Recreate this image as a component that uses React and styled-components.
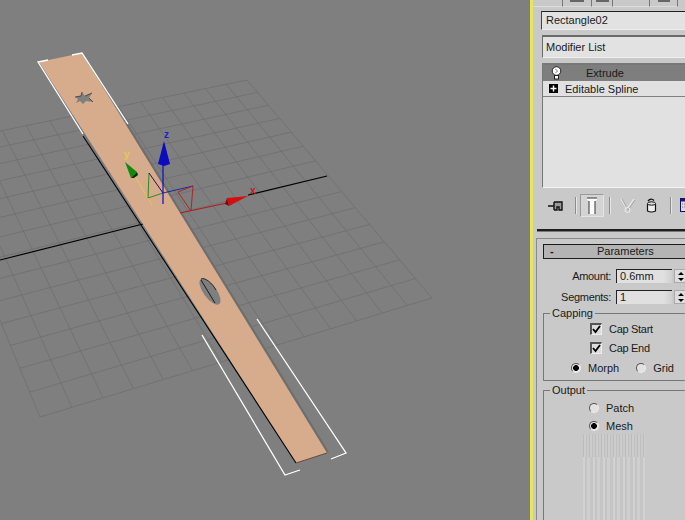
import React from 'react'
import styled, { createGlobalStyle } from 'styled-components'

const GlobalStyle = createGlobalStyle`
    html, body { margin: 0; padding: 0; background: #7f7f7f; }
    * { box-sizing: border-box; }
`

// grid on the ground plane, 14 cells each way, corners read off the picture
const corners = [[247, 80], [432, 298], [40, 417], [-72, 146]]

const homography = ([p0, p1, p2, p3]) => {
    const dx1 = p1[0] - p2[0]
    const dx2 = p3[0] - p2[0]
    const dy1 = p1[1] - p2[1]
    const dy2 = p3[1] - p2[1]
    const sx = p0[0] - p1[0] + p2[0] - p3[0]
    const sy = p0[1] - p1[1] + p2[1] - p3[1]
    const det = dx1 * dy2 - dx2 * dy1
    const g = (sx * dy2 - dx2 * sy) / det
    const h = (dx1 * sy - sx * dy1) / det
    const a = p1[0] - p0[0] + g * p1[0]
    const b = p3[0] - p0[0] + h * p3[0]
    const d = p1[1] - p0[1] + g * p1[1]
    const e = p3[1] - p0[1] + h * p3[1]
    return (u, v) => {
        const w = g * u + h * v + 1
        return [(a * u + b * v + p0[0]) / w, (d * u + e * v + p0[1]) / w]
    }
}

const gridPath = () => {
    const map = homography(corners)
    let path = ''
    for (let i = 0; i <= 14; i++) {
        const t = i / 14
        const a = map(t, 0)
        const b = map(t, 1)
        const c = map(0, t)
        const d = map(1, t)
        path += `M${a[0].toFixed(1)} ${a[1].toFixed(1)}L${b[0].toFixed(1)} ${b[1].toFixed(1)}`
        path += `M${c[0].toFixed(1)} ${c[1].toFixed(1)}L${d[0].toFixed(1)} ${d[1].toFixed(1)}`
    }
    return path
}

const Scene = () => (
    <svg width="529" height="520" viewBox="0 0 529 520" style={{ display: 'block' }}>
        <path d={gridPath()} stroke="#707070" strokeWidth="0.9" fill="none" />
        <path d="M0 260L143 224M248 195L327 176" stroke="#000" strokeWidth="1.2" fill="none" />
        {/* extruded strip */}
        <polygon points="128,124 329,452 325,454 125,124" fill="#6e6e6e" />
        <polygon points="39,62 82,53 327,453 296,463" fill="#d6ac8d" />
        <path d="M83 136L296 463" stroke="#000" strokeWidth="1.1" fill="none" />
        <path d="M296 463L327 453" stroke="#6b4a35" strokeWidth="1" fill="none" />
        {/* star hole */}
        <polygon points="75,97 81,96 82,92 85,96 92,93 89,98 93,102 86,101 83,104 80,101 76,103 78,99" fill="#7f7f7f" />
        <path d="M75 97L81 96L82 92M85 96L92 93M89 98L93 102" stroke="#2a2a2a" strokeWidth="0.7" fill="none" />
        {/* slot hole */}
        <ellipse cx="210" cy="291.5" rx="15.5" ry="6.5" transform="rotate(54 210 291.5)" fill="#7f7f7f" />
        <path d="M201 279C205 277 212 283 216 290" stroke="#1c1c1c" strokeWidth="0.9" fill="none" />
        <path d="M201 280L215 303" stroke="#1c1c1c" strokeWidth="1" fill="none" />
        {/* selection brackets */}
        <path d="M48 60L38 62L83 134M72 55L82 53L128 124M202 335L285 475L300 470M257 319L346 453L331 459" stroke="#fff" strokeWidth="1.3" fill="none" />
        {/* gizmo */}
        <path d="M130 168L152 205" stroke="#e2c95a" strokeWidth="1" fill="none" />
        <path d="M149 173L148 198L163 193" stroke="#2f8a1f" strokeWidth="1" fill="none" />
        <path d="M149 173L163 193" stroke="#2b1050" strokeWidth="1" fill="none" />
        <path d="M163 193L193 186" stroke="#1c2a9a" strokeWidth="1" fill="none" />
        <path d="M193 186L191 211L178 192L193 186" stroke="#a5282a" strokeWidth="1" fill="none" />
        <path d="M180 213L227 203" stroke="#b5191b" strokeWidth="1" fill="none" />
        <path d="M163 164V204" stroke="#0d0dc8" strokeWidth="1.2" fill="none" />
        <polygon points="164,141 170,164 164,166 158,164" fill="#0b0bbf" />
        <polygon points="125,162 137,172 131,178" fill="#0f8a0f" />
        <polygon points="137,172 131,178 134,178 138,175" fill="#063006" />
        <polygon points="248,196 227,198 229,206" fill="#d40f0f" />
        <polygon points="227,198 229,206 225,204" fill="#7a0a0a" />
        <AxisLabel x="164" y="138" fill="#2020c8">z</AxisLabel>
        <AxisLabel x="124" y="158" fill="#e2c95a">y</AxisLabel>
        <AxisLabel x="250" y="194" fill="#c81818">x</AxisLabel>
    </svg>
)

const PinIcon = () => (
    <svg width="16" height="14" viewBox="0 0 16 14">
        <path d="M0 7H6" stroke="#000" strokeWidth="1.4" />
        <path d="M6 3V11M6 3H14V11H11V8H9V11H6" stroke="#111" strokeWidth="1.4" fill="#9a9a9a" />
    </svg>
)
const ShowEndIcon = () => (
    <svg width="12" height="18" viewBox="0 0 12 18">
        <path d="M1 1H11V3L9 4V17H3V4L1 3Z" fill="#fff" />
        <path d="M1 1H11M3 4V17M9 4V17" stroke="#333" strokeWidth="1" fill="none" />
    </svg>
)
const FunnelIcon = () => (
    <svg width="16" height="16" viewBox="0 0 16 16">
        <path d="M1 1L7 11L14 1" stroke="#eeeeee" strokeWidth="1.2" fill="none" />
        <path d="M2 1L8 12L15 2" stroke="#999" strokeWidth="0.8" fill="none" />
        <circle cx="7.5" cy="12" r="2.5" stroke="#eee" fill="none" />
    </svg>
)
const TrashIcon = () => (
    <svg width="11" height="15" viewBox="0 0 11 15">
        <path d="M1.5 6V13Q5.5 15 9.5 13V6" fill="#eee" stroke="#111" strokeWidth="1.2" />
        <ellipse cx="5.5" cy="5.5" rx="4" ry="1.7" fill="#ddd" stroke="#111" />
        <path d="M2 3Q5 -0.5 8 2.5" stroke="#111" strokeWidth="1.3" fill="none" />
    </svg>
)
const ConfigIcon = () => (
    <svg width="5" height="15" viewBox="0 0 5 15">
        <rect x="0.5" y="0.5" width="14" height="13" fill="#dcdce8" stroke="#11115a" />
        <rect x="0.5" y="0.5" width="14" height="3" fill="#1a1a70" />
        <path d="M2 6H12M2 9H12" stroke="#777" strokeDasharray="1 1" />
    </svg>
)
const BulbIcon = () => (
    <svg width="11" height="14" viewBox="0 0 11 14">
        <circle cx="5.5" cy="5" r="4.3" fill="#fff" stroke="#222" />
        <path d="M4.5 3L6.5 5L4.5 7" stroke="#777" fill="none" />
        <rect x="3.5" y="9.5" width="4" height="3.5" fill="#fff" stroke="#222" />
    </svg>
)
const PlusBox = () => (
    <svg width="9" height="9" viewBox="0 0 9 9">
        <rect width="9" height="9" fill="#000" />
        <path d="M1.5 4.5H7.5M4.5 1.5V7.5" stroke="#fff" strokeWidth="1.4" />
    </svg>
)
const CheckMark = () => (
    <svg width="9" height="9" viewBox="0 0 9 9">
        <path d="M1 4L3.5 7L8 1" stroke="#000" strokeWidth="1.8" fill="none" />
    </svg>
)

const Spinner = () => (
    <SpinBox>
        <SpinUp />
        <SpinDown />
    </SpinBox>
)

const Spin = ({ label, value }) => (
    <SpinRow>
        <SpinLabel>{label}</SpinLabel>
        <SpinInput>{value}</SpinInput>
        <Spinner />
    </SpinRow>
)

const Check = ({ label }) => (
    <CheckRow>
        <CheckBox><CheckMark /></CheckBox>
        <span>{label}</span>
    </CheckRow>
)

const Radio = ({ label, on }) => (
    <RadioItem>
        <RadioDot $on={on} />
        <span>{label}</span>
    </RadioItem>
)

const App = () => {
    return (
        <Page>
            <GlobalStyle />
            <Viewport><Scene /></Viewport>
            <YellowBar />
            <Panel>
                <TabStrip>
                    <Tab $w={30} />
                    <Tab $w={29}><TabMark $w={14} /></Tab>
                    <Tab $w={21}><TabMark $w={13} /></Tab>
                    <Tab $w={37} />
                    <Tab $w={28}><TabMark $w={12} /></Tab>
                </TabStrip>
                <NameField>Rectangle02</NameField>
                <ModifierField>Modifier List</ModifierField>
                <Stack>
                    <StackTop>
                        <BulbSlot><BulbIcon /></BulbSlot>
                        <span>Extrude</span>
                    </StackTop>
                    <StackBase>
                        <PlusBox />
                        <span>Editable Spline</span>
                    </StackBase>
                </Stack>
                <Toolbar>
                    <PinSlot><PinIcon /></PinSlot>
                    <Sep />
                    <ToolPressed><ShowEndIcon /></ToolPressed>
                    <Sep />
                    <FunnelSlot><FunnelIcon /></FunnelSlot>
                    <TrashSlot><TrashIcon /></TrashSlot>
                    <Sep />
                    <ConfigSlot><ConfigIcon /></ConfigSlot>
                </Toolbar>
                <HeavyRule />
                <Rollout>
                    <RolloutHeader>
                        <Dash>-</Dash>
                        <RolloutTitle>Parameters</RolloutTitle>
                    </RolloutHeader>
                    <Spin label="Amount:" value="0.6mm" />
                    <Spin label="Segments:" value="1" />
                    <Group>
                        <Legend>Capping</Legend>
                        <Check label="Cap Start" />
                        <Check label="Cap End" />
                        <RadioRow>
                            <Radio label="Morph" on />
                            <Radio label="Grid" />
                        </RadioRow>
                    </Group>
                    <OutputGroup>
                        <Legend>Output</Legend>
                        <RadioStack>
                            <Radio label="Patch" />
                            <Radio label="Mesh" on />
                        </RadioStack>
                        <NoiseTop />
                        <NoiseBottom />
                    </OutputGroup>
                </Rollout>
            </Panel>
        </Page>
    )
}

const Page = styled.div`
    display: flex;
    width: 685px;
    height: 520px;
    overflow: hidden;
    font-family: "Liberation Sans", Arial, sans-serif;
    font-size: 11px;
    color: #1a1a1a;
`
const Viewport = styled.div`
    flex: 0 0 529px;
    background: #7f7f7f;
`
const AxisLabel = styled.text`
    font-family: "Liberation Sans", Arial, sans-serif;
    font-size: 10px;
    font-weight: 700;
`
const YellowBar = styled.div`
    flex: 0 0 4px;
    background: #e6e65a;
    border-left: 1px solid #80806a;
`
const Panel = styled.div`
    flex: 1;
    min-width: 0;
    display: flex;
    flex-direction: column;
    background: #c9c9c9;
`
const TabStrip = styled.div`
    display: flex;
    align-items: flex-start;
    flex: 0 0 10px;
`
const Tab = styled.div`
    flex: 0 0 ${p => p.$w}px;
    height: 7px;
    border-right: 1px solid #777;
    border-bottom: 1px solid #dcdcdc;
    display: flex;
    justify-content: center;
    align-items: flex-start;
`
const TabMark = styled.div`
    width: ${p => p.$w}px;
    height: 2px;
    background: #666;
`
const NameField = styled.div`
    flex: 0 0 19px;
    margin: 1px 0 0 8px;
    padding-left: 4px;
    line-height: 17px;
    background: #e2e2e2;
    border-top: 1px solid #222;
    border-left: 1px solid #444;
    border-bottom: 1px solid #eee;
`
const ModifierField = styled.div`
    flex: 0 0 23px;
    margin: 5px 0 0 9px;
    padding: 1px 0 0 3px;
    line-height: 19px;
    background: #e2e2e2;
    border-top: 2px solid #6a6a6a;
    border-left: 1px solid #6a6a6a;
    border-bottom: 1px solid #eee;
`
const Stack = styled.div`
    flex: 0 0 125px;
    margin: 5px 0 0 9px;
    background: #e1e1e1;
    border-top: 2px solid #777;
    border-left: 1px solid #777;
    border-bottom: 1px solid #f4f4f4;
`
const StackTop = styled.div`
    display: flex;
    align-items: center;
    height: 16px;
    padding-bottom: 1px;
    background: #7e7e7e;
`
const BulbSlot = styled.div`
    display: flex;
    flex: 0 0 43px;
    padding: 1px 0 0 8px;
`
const StackBase = styled.div`
    display: flex;
    align-items: center;
    gap: 7px;
    height: 16px;
    padding-left: 6px;
    border-bottom: 1px solid #808080;
`
const Toolbar = styled.div`
    flex: 0 0 41px;
    display: flex;
    align-items: center;
    padding: 6px 0 12px;
`
const PinSlot = styled.div`
    display: flex;
    margin: 0 11px 0 15px;
`
const Sep = styled.div`
    flex: 0 0 2px;
    width: 2px;
    height: 17px;
    background: #8c8c8c;
    border-right: 1px solid #e6e6e6;
`
const ToolPressed = styled.div`
    flex: 0 0 24px;
    height: 23px;
    margin: 0 5px 0 3px;
    display: flex;
    align-items: center;
    justify-content: center;
    background: #d4d4d4;
    border: 1px solid;
    border-color: #9a9a9a #e4e4e4 #e4e4e4 #9a9a9a;
`
const FunnelSlot = styled.div`
    display: flex;
    margin: 0 10px 0 9px;
`
const TrashSlot = styled.div`
    display: flex;
    margin: 0 13px 0 0;
`
const ConfigSlot = styled.div`
    display: flex;
    margin-left: 8px;
`
const HeavyRule = styled.div`
    flex: 0 0 3px;
    margin-left: 4px;
    background: #1e1e1e;
    border-bottom: 1px solid #777;
`
const Rollout = styled.div`
    margin: 6px 0 0 3px;
    padding: 5px 0 0 6px;
    flex: 1;
    min-height: 0;
    border-top: 1px solid #8a8a8a;
    border-left: 1px solid #8a8a8a;
`
const RolloutHeader = styled.div`
    position: relative;
    height: 15px;
    margin-bottom: 10px;
    background: #b4b4b4;
    border: 1px solid #1c1c1c;
    border-right: none;
    line-height: 13px;
`
const Dash = styled.span`
    margin-left: 6px;
    font-weight: 700;
`
const RolloutTitle = styled.span`
    position: absolute;
    left: 53px;
    top: 0;
`
const SpinRow = styled.div`
    display: grid;
    grid-template-columns: 68px 56px 11px;
    column-gap: 5px;
    align-items: center;
    height: 14px;
    margin-bottom: 7px;
`
const SpinLabel = styled.div`
    text-align: right;
    letter-spacing: -0.3px;
`
const SpinInput = styled.div`
    height: 14px;
    padding-left: 3px;
    line-height: 13px;
    background: linear-gradient(90deg, #e0e0e0, #e0e0e0 85%, #cfcfcf);
    border-top: 1px solid #222;
    border-left: 1px solid #222;
`
const SpinBox = styled.div`
    display: flex;
    flex-direction: column;
    height: 14px;
    margin-left: -3px;
    background: #dedede;
    border: 1px solid #aaa;
    align-items: center;
    justify-content: space-around;
`
const SpinUp = styled.div`
    width: 0;
    height: 0;
    border-left: 3px solid transparent;
    border-right: 3px solid transparent;
    border-bottom: 3px solid #000;
`
const SpinDown = styled.div`
    width: 0;
    height: 0;
    border-left: 3px solid transparent;
    border-right: 3px solid transparent;
    border-top: 3px solid #000;
`
const Group = styled.fieldset`
    margin: 0;
    margin-top: -4px;
    height: 74px;
    padding: 4px 0 0 0;
    border: 1px solid #777;
    border-right: none;
    border-radius: 1px;
`
const OutputGroup = styled(Group)`
    margin-top: 3px;
    height: 142px;
    padding: 5px 0 0 0;
    border-bottom: none;
`
const Legend = styled.legend`
    margin-left: 6px;
    padding: 0 2px;
    line-height: 12px;
`
const CheckRow = styled.div`
    display: flex;
    align-items: center;
    gap: 7px;
    height: 12px;
    margin: 0 0 7px 46px;
    letter-spacing: -0.3px;
`
const CheckBox = styled.div`
    display: flex;
    align-items: center;
    justify-content: center;
    width: 12px;
    height: 12px;
    background: #dcdcdc;
    border-top: 2px solid #555;
    border-left: 2px solid #555;
    border-right: 1px solid #eee;
    border-bottom: 1px solid #eee;
`
const RadioRow = styled.div`
    display: flex;
    gap: 17px;
    margin-left: 27px;
`
const RadioStack = styled.div`
    display: flex;
    flex-direction: column;
    gap: 5px;
    margin-left: 45px;
`
const RadioItem = styled.div`
    display: flex;
    align-items: center;
    gap: 7px;
    height: 13px;
`
const RadioDot = styled.div`
    width: 10px;
    height: 10px;
    border-radius: 50%;
    background: ${p => (p.$on ? 'radial-gradient(circle, #000 0 2.6px, #e2e2e2 3.2px)' : '#e2e2e2')};
    border: 1px solid;
    border-color: #555 #ececec #ececec #555;
`
const NoiseTop = styled.div`
    width: 62px;
    height: 23px;
    margin: 2px 0 0 39px;
    background: repeating-linear-gradient(90deg, #bcbcbc 0 1px, #cdcdcd 1px 3px, #c0c0c0 3px 4px, #cacaca 4px 6px);
`
const NoiseBottom = styled.div`
    width: 62px;
    height: 70px;
    margin-left: 39px;
    background: repeating-linear-gradient(90deg, #d2d2d2 0 2px, #c4c4c4 2px 4px, #cfcfcf 4px 7px, #c5c5c5 7px 10px);
`

export default App
